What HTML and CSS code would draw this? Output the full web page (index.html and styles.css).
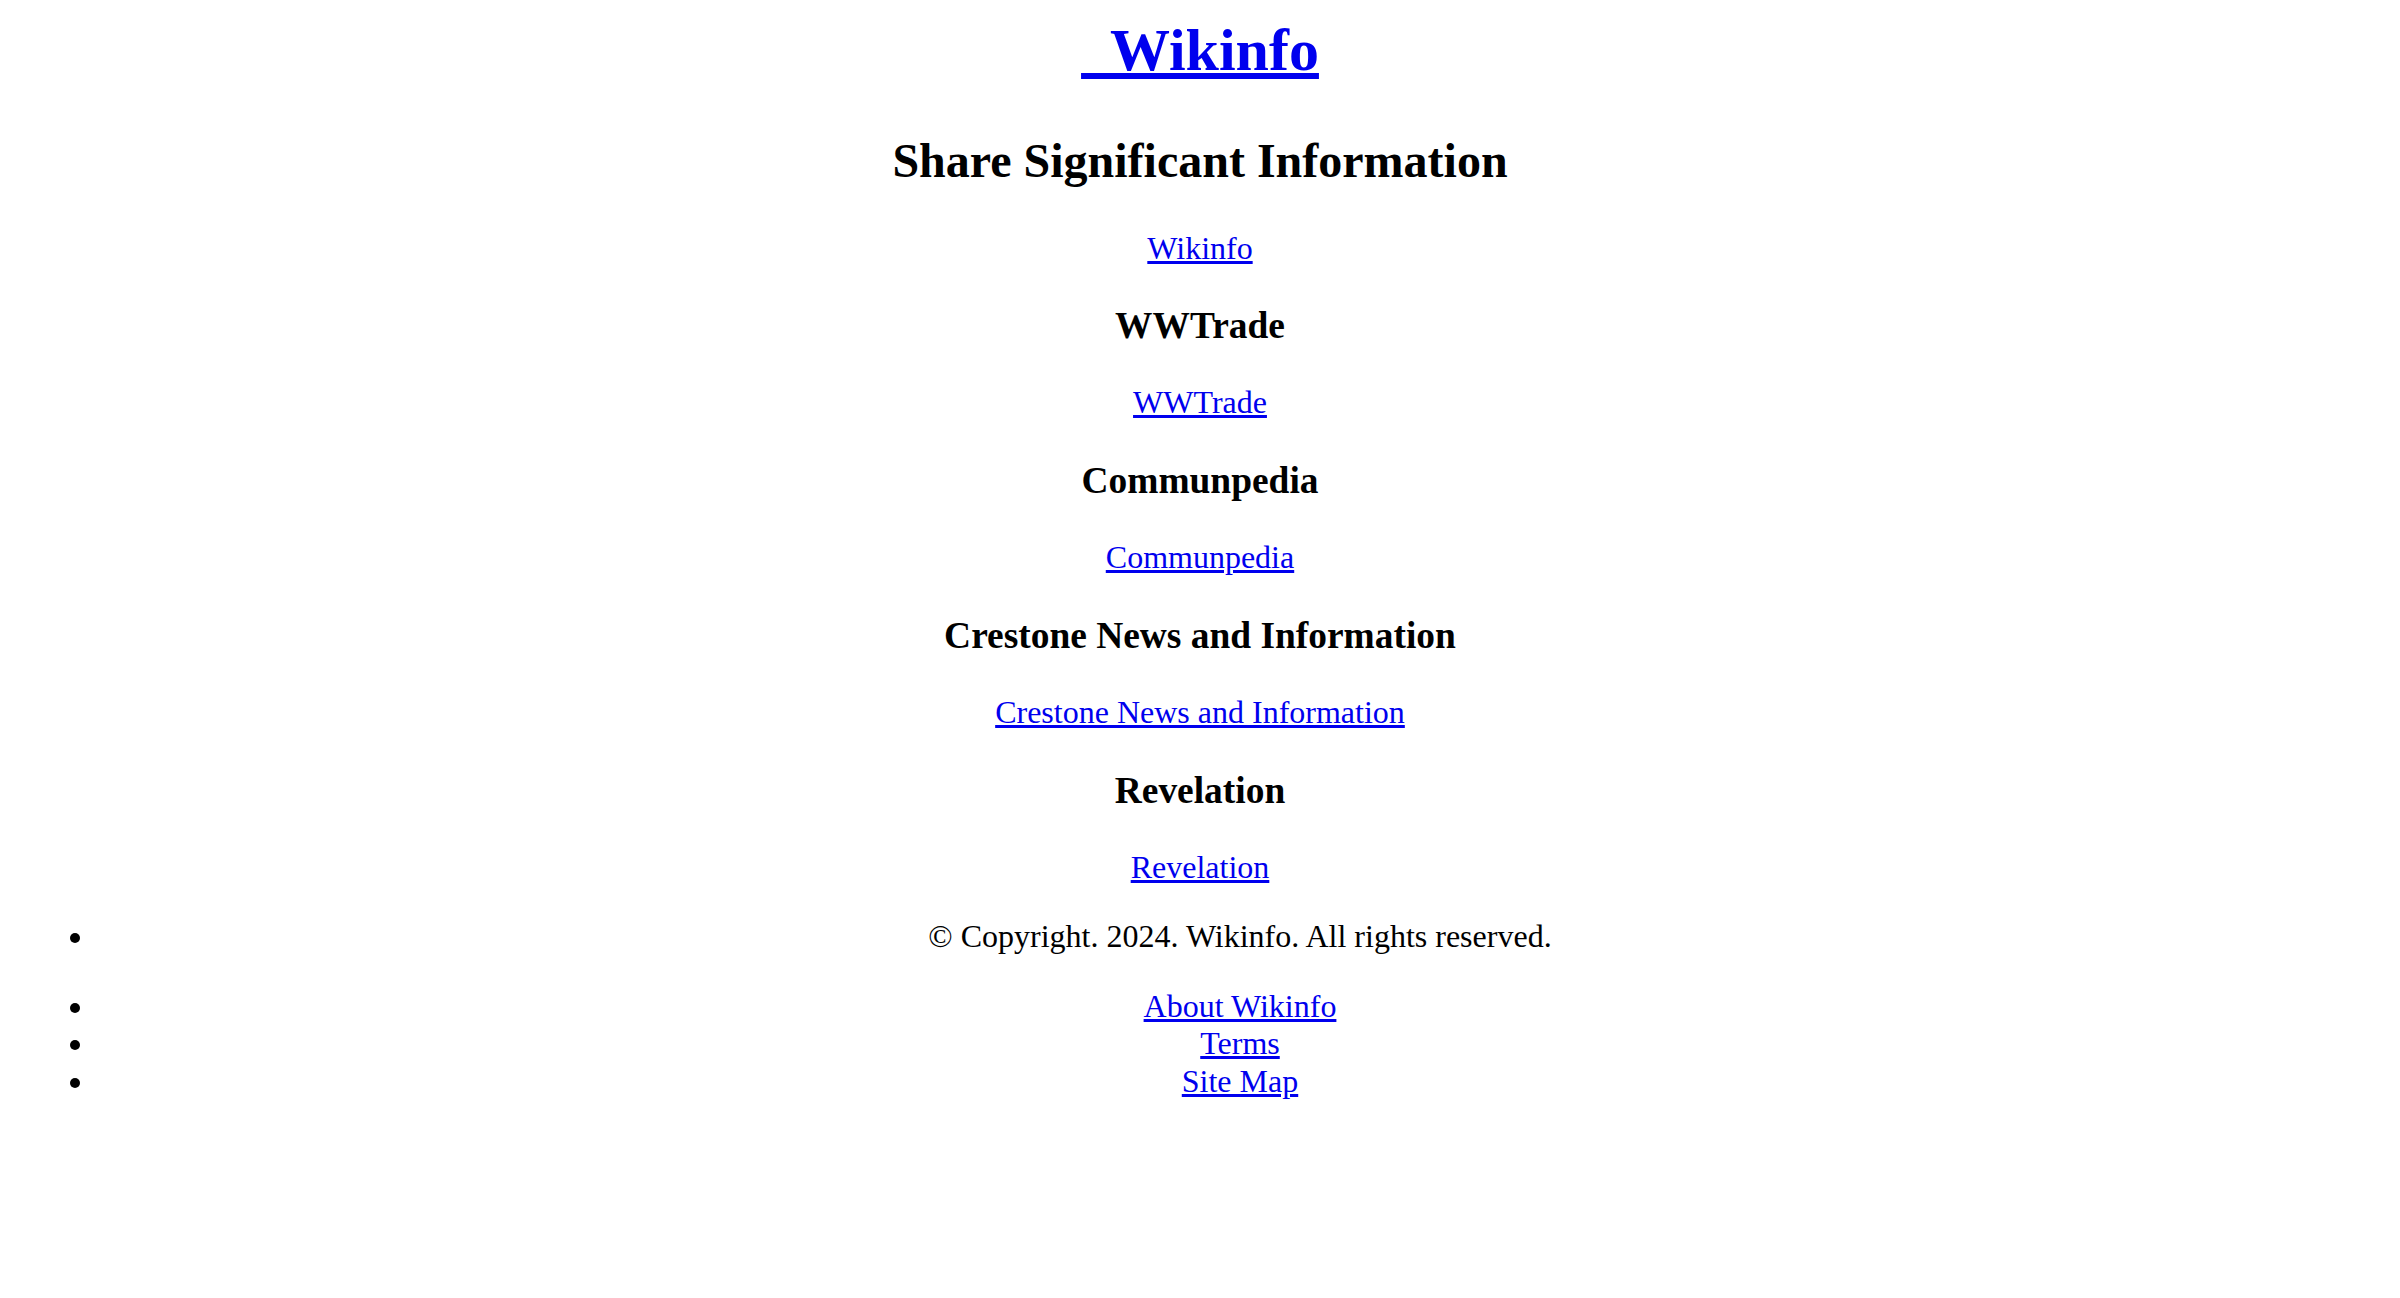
FILE: index.html
```html
<!DOCTYPE html>
<html>
<head>
<meta charset="utf-8">
<title>Wikinfo</title>
<link rel="stylesheet" href="styles.css">
</head>
<body class="page">
<h1 class="site-title"><a class="link" href="#">&nbsp; Wikinfo</a></h1>
<h2 class="tagline">Share Significant Information</h2>
<p class="para"><a class="link" href="#">Wikinfo</a></p>
<h3 class="section">WWTrade</h3>
<p class="para"><a class="link" href="#">WWTrade</a></p>
<h3 class="section">Communpedia</h3>
<p class="para"><a class="link" href="#">Communpedia</a></p>
<h3 class="section">Crestone News and Information</h3>
<p class="para"><a class="link" href="#">Crestone News and Information</a></p>
<h3 class="section">Revelation</h3>
<p class="para"><a class="link" href="#">Revelation</a></p>
<ul class="list">
<li>© Copyright. 2024. Wikinfo. All rights reserved.</li>
</ul>
<ul class="list">
<li><a class="link" href="#">About Wikinfo</a></li>
<li><a class="link" href="#">Terms</a></li>
<li><a class="link" href="#">Site Map</a></li>
</ul>
</body>
</html>
```
FILE: styles.css
```css
html { background: #fff; }
.page {
  margin: 16px;
  font-family: "Liberation Serif", "Times New Roman", serif;
  font-size: 32px;
  color: #000;
  text-align: center;
}
.link { color: #0000ee; text-decoration: underline; }
.site-title { font-size: 60px; font-weight: bold; margin: 0 0 47.6px; }
.tagline { font-size: 48px; font-weight: bold; margin: 39.84px 0 42px; }
.section { font-size: 37.44px; font-weight: bold; margin: 37.44px 0; }
.para { margin: 32px 0; }
.list { margin: 32px 0; padding-left: 80px; }
.list li { line-height: 37.5px; }
```
